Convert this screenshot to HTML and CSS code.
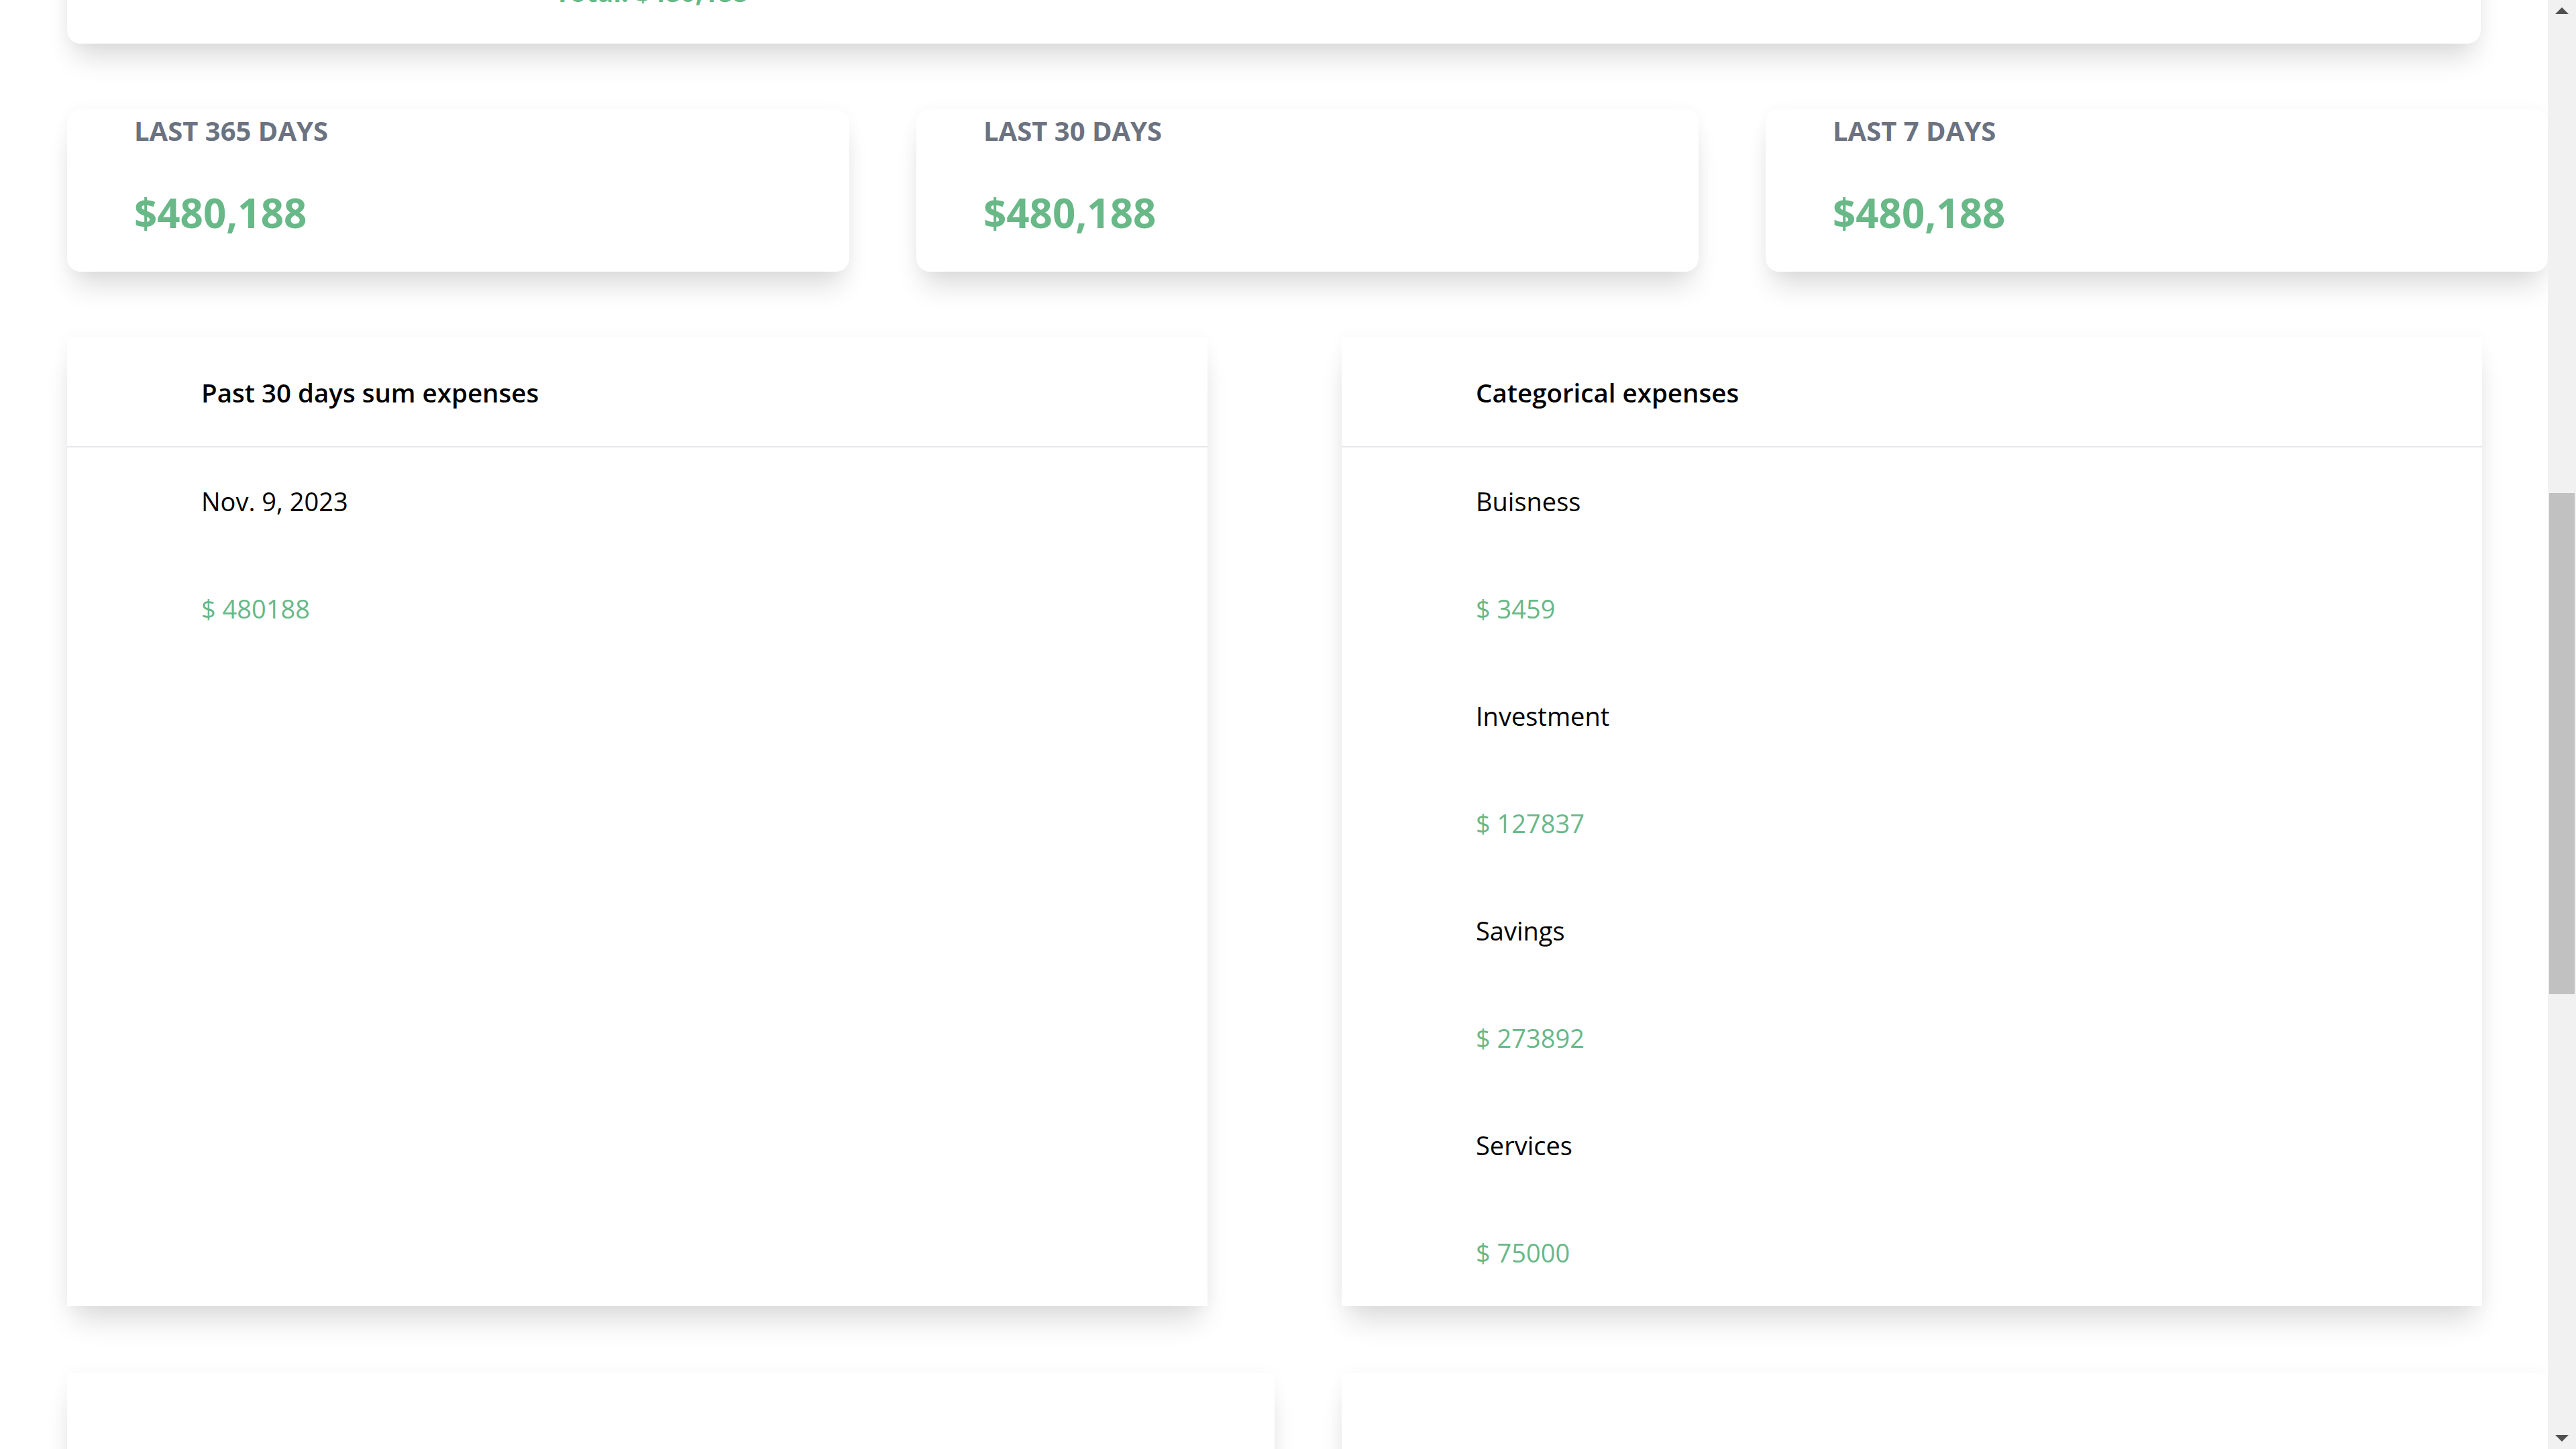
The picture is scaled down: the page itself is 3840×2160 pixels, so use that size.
FILE: index.html
```html
<!DOCTYPE html>
<html lang="en">
<head>
<meta charset="utf-8">
<title>Expenses dashboard</title>
<link rel="stylesheet" href="styles.css">
</head>
<body>
<div class="viewport" id="viewport">
  <main class="page">
    <section class="summary-card">
      <p class="summary-total">Total: $480,188</p>
    </section>

    <section class="stats">
      <div class="stat">
        <div class="stat-label">Last 365 days</div>
        <div class="stat-value">$480,188</div>
      </div>
      <div class="stat">
        <div class="stat-label">Last 30 days</div>
        <div class="stat-value">$480,188</div>
      </div>
      <div class="stat">
        <div class="stat-label">Last 7 days</div>
        <div class="stat-value">$480,188</div>
      </div>
    </section>

    <section class="panels">
      <div class="panel">
        <div class="panel-header"><h2 class="panel-title">Past 30 days sum expenses</h2></div>
        <div class="panel-body">
          <p class="item-name">Nov. 9, 2023</p>
          <p class="item-amount">$ 480188</p>
        </div>
      </div>
      <div class="panel">
        <div class="panel-header"><h2 class="panel-title">Categorical expenses</h2></div>
        <div class="panel-body">
          <p class="item-name">Buisness</p>
          <p class="item-amount">$ 3459</p>
          <p class="item-name">Investment</p>
          <p class="item-amount">$ 127837</p>
          <p class="item-name">Savings</p>
          <p class="item-amount">$ 273892</p>
          <p class="item-name">Services</p>
          <p class="item-amount">$ 75000</p>
        </div>
      </div>
    </section>

    <section class="lower">
      <div class="lower-card"></div>
      <div class="lower-card"></div>
    </section>
  </main>
</div>
<div class="scrollbar" aria-hidden="true">
  <div class="sb-button"><span class="arrow-up"></span></div>
  <div class="sb-track"><div class="sb-thumb"></div></div>
  <div class="sb-button"><span class="arrow-down"></span></div>
</div>
<script src="script.js"></script>
</body>
</html>
```

FILE: styles.css
```css
* { box-sizing: border-box; }

html, body {
  margin: 0;
  padding: 0;
  height: 100%;
}

body {
  display: flex;
  overflow: hidden;
  background: #ffffff;
  font-family: "Open Sans", "Noto Sans", "Liberation Sans", sans-serif;
  color: #000000;
}

.viewport {
  flex: 1;
  height: 100vh;
  overflow: hidden;
}

.page {
  padding: 100px 0 300px;
  display: flex;
  flex-direction: column;
}

p, h1, h2 { margin: 0; }

/* top summary card */
.summary-card {
  margin: 0 100px;
  padding: 163px 200px 47px;
  background: #fff;
  border-radius: 20px;
  box-shadow: 0 30px 40px -10px rgba(0,0,0,0.14), 0 0 25px rgba(0,0,0,0.035);
}

.summary-total {
  margin-left: 527px;
  font-size: 39px;
  line-height: 60px;
  font-weight: 700;
  color: #68b888;
}

/* stat cards */
.stats {
  margin: 98px 0 0 100px;
  display: grid;
  grid-template-columns: repeat(3, 1fr);
  gap: 100px;
}

.stat {
  background: #fff;
  border-radius: 20px;
  padding: 2px 100px 43px;
  box-shadow: 0 30px 40px -10px rgba(0,0,0,0.14), 0 0 25px rgba(0,0,0,0.035);
}

.stat-label {
  font-size: 40px;
  line-height: 60px;
  font-weight: 700;
  color: #6b7280;
  text-transform: uppercase;
}

.stat-value {
  margin-top: 47px;
  font-size: 60px;
  line-height: 90px;
  font-weight: 700;
  color: #68b888;
}

/* panels */
.panels {
  margin: 98px 98px 0 100px;
  display: grid;
  grid-template-columns: 1fr 1fr;
  gap: 200px;
}

.panel {
  background: #fff;
  box-shadow: 0 30px 40px -10px rgba(0,0,0,0.14), 0 0 25px rgba(0,0,0,0.035);
}

.panel-header {
  padding: 52px 200px 50px;
  border-bottom: 2px solid #e5e7eb;
}

.panel-title {
  font-size: 38.5px;
  line-height: 60px;
  font-weight: 600;
}

.panel-body {
  padding: 50px 200px;
  display: flex;
  flex-direction: column;
  gap: 100px;
}

.item-name,
.item-amount {
  font-size: 38px;
  line-height: 60px;
  font-weight: 400;
}

.item-amount { color: #68b888; }

/* lower row */
.lower {
  margin: 100px 0 0 100px;
  display: grid;
  grid-template-columns: 1800px 1fr;
  gap: 100px;
}

.lower-card {
  height: 700px;
  background: #fff;
  box-shadow: 0 30px 40px -10px rgba(0,0,0,0.14), 0 0 25px rgba(0,0,0,0.035);
}

/* scrollbar */
.scrollbar {
  width: 42px;
  height: 100vh;
  background: #f1f1f1;
  display: flex;
  flex-direction: column;
}

.sb-button {
  height: 42px;
  display: flex;
  align-items: center;
  justify-content: center;
}

.sb-track {
  flex: 1;
  padding: 0 2px;
}

.sb-thumb {
  margin-top: 693px;
  height: 747px;
  background: #c1c1c1;
}

.arrow-up,
.arrow-down {
  width: 0;
  height: 0;
  border-left: 10px solid transparent;
  border-right: 10px solid transparent;
}

.arrow-up {
  border-bottom: 10px solid #505050;
  margin-bottom: 10px;
}

.arrow-down {
  border-top: 10px solid #505050;
  margin-top: 10px;
}
```

FILE: script.js
```js
document.getElementById('viewport').scrollTop = 305;
```
